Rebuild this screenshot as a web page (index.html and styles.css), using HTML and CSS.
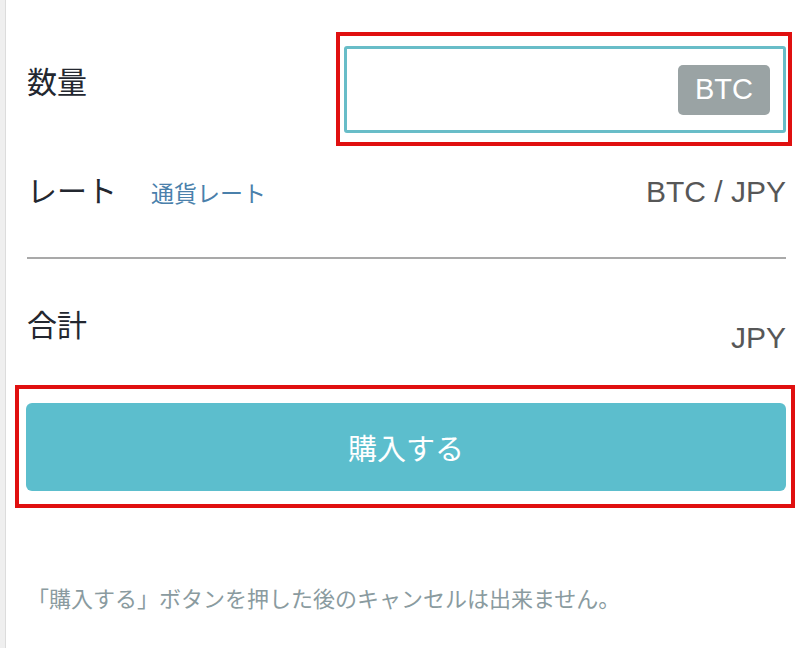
FILE: index.html
```html
<!DOCTYPE html>
<html lang="ja">
<head>
<meta charset="utf-8">
<title>購入</title>
<link rel="stylesheet" href="styles.css">
</head>
<body>
<div class="page">
  <div class="rail"></div>
  <main class="content">
    <div class="row row-qty">
      <div class="label label-qty">数量</div>
      <div class="mark mark-field">
        <div class="field"><span class="unit">BTC</span></div>
      </div>
    </div>
    <div class="row row-rate">
      <div class="label-group"><span class="label">レート</span><span class="link">通貨レート</span></div>
      <div class="value">BTC / JPY</div>
    </div>
    <hr class="divider">
    <div class="row row-total">
      <div class="label label-total">合計</div>
      <div class="value value-total">JPY</div>
    </div>
    <div class="mark mark-button"><button class="buy" type="button">購入する</button></div>
    <p class="note">「購入する」ボタンを押した後のキャンセルは出来ません。</p>
  </main>
</div>
</body>
</html>
```
FILE: styles.css
```css
* { box-sizing: border-box; }
body {
  margin: 0;
  background: #ffffff;
  font-family: "Liberation Sans", "Noto Sans CJK JP", sans-serif;
}
.page {
  display: flex;
  min-height: 648px;
}
.rail {
  width: 6px;
  flex: 0 0 6px;
  background: #efefef;
  border-right: 1px solid #dcdcdc;
}
.content {
  flex: 1;
  padding: 32px 16px 0 21px;
}
.row {
  display: flex;
  justify-content: space-between;
}
.label {
  font-family: "Noto Sans CJK JP", sans-serif;
  font-size: 30px;
  line-height: 30px;
  color: #23272f;
}
.row-qty { align-items: flex-start; }
.label-qty { margin-top: 33px; }
.mark {
  border: 4px solid #e01010;
}
.mark-field {
  width: 456px;
  margin-right: -6px;
  padding: 10px 2px 9px 4px;
}
.field {
  height: 87px;
  border: 3px solid #68bdc8;
  border-radius: 3px;
  display: flex;
  justify-content: flex-end;
  align-items: center;
  padding-right: 13px;
}
.unit {
  width: 92px;
  height: 50px;
  border-radius: 5px;
  background: #9aa3a4;
  color: #ffffff;
  font-size: 29px;
  display: flex;
  align-items: center;
  justify-content: center;
}
.row-rate {
  margin-top: 28px;
  align-items: baseline;
}
.label-group {
  display: flex;
  align-items: baseline;
}
.link {
  font-family: "Noto Sans CJK JP", sans-serif;
  font-size: 23px;
  color: #4a80ab;
  margin-left: 34px;
}
.value {
  font-size: 30px;
  line-height: 30px;
  color: #575757;
}
.divider {
  border: 0;
  height: 2px;
  background: #a9a9a9;
  margin: 48px 0 0;
}
.row-total {
  margin-top: 49px;
  height: 45px;
  align-items: flex-start;
}
.value-total { align-self: flex-end; }
.mark-button {
  margin: 32px -9px 0 -12px;
  padding: 14px 5px 13px 7px;
}
.buy {
  display: block;
  width: 100%;
  height: 88px;
  border: 0;
  border-radius: 6px;
  background: #5cbecd;
  color: #ffffff;
  font-family: "Noto Sans CJK JP", sans-serif;
  font-size: 29px;
}
.note {
  margin: 78px 0 0;
  font-family: "Noto Sans CJK JP", sans-serif;
  font-size: 22px;
  line-height: 22px;
  color: #8a9ba0;
}
```
